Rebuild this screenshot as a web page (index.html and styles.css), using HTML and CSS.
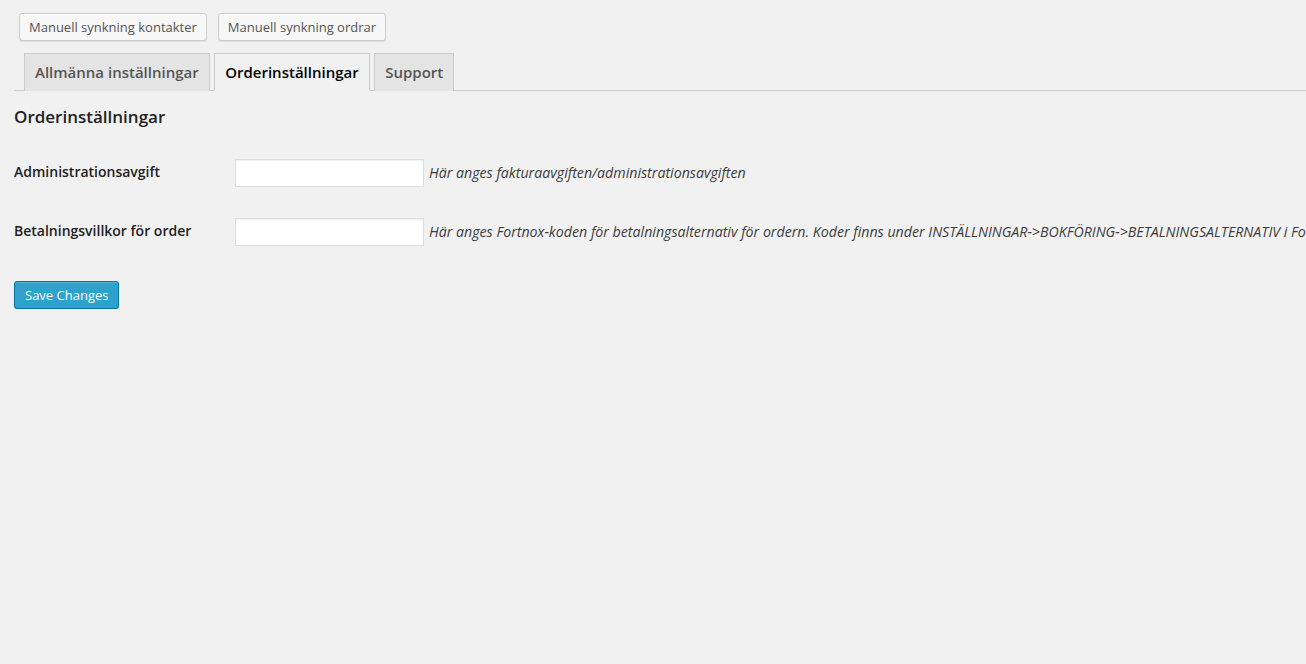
FILE: index.html
```html
<!DOCTYPE html>
<html lang="sv">
<head>
<meta charset="utf-8">
<title>Orderinställningar</title>
<link rel="stylesheet" href="styles.css">
</head>
<body>
<div class="wrap">
  <div class="sync-actions">
    <button class="button" type="button">Manuell synkning kontakter</button>
    <button class="button" type="button">Manuell synkning ordrar</button>
  </div>
  <nav class="nav-tab-wrapper">
    <a class="nav-tab" href="#">Allmänna inställningar</a>
    <a class="nav-tab nav-tab-active" href="#">Orderinställningar</a>
    <a class="nav-tab" href="#">Support</a>
  </nav>
  <form class="settings-form">
    <h3 class="section-title">Orderinställningar</h3>
    <table class="form-table">
      <tbody>
        <tr>
          <th scope="row">Administrationsavgift</th>
          <td><div class="field"><input class="text-input" type="text"><span class="description">Här anges fakturaavgiften/administrationsavgiften</span></div></td>
        </tr>
        <tr>
          <th scope="row">Betalningsvillkor för order</th>
          <td><div class="field"><input class="text-input" type="text"><span class="description">Här anges Fortnox-koden för betalningsalternativ för ordern. Koder finns under INSTÄLLNINGAR-&gt;BOKFÖRING-&gt;BETALNINGSALTERNATIV i Fortnox</span></div></td>
        </tr>
      </tbody>
    </table>
    <p class="submit"><button class="button button-primary" type="submit">Save Changes</button></p>
  </form>
</div>
</body>
</html>
```

FILE: styles.css
```css
html, body {
  margin: 0;
  padding: 0;
  background: #f1f1f1;
  overflow: hidden;
}
body {
  font-family: "Open Sans", "Liberation Sans", sans-serif;
  font-size: 13px;
  color: #444;
  width: 1306px;
  height: 664px;
}
.wrap {
  padding: 13px 0 0 14px;
  overflow: hidden;
}
.sync-actions {
  display: flex;
  gap: 11px;
  margin-left: 5px;
}
.button {
  font-family: inherit;
  font-size: 13px;
  line-height: 26px;
  height: 28px;
  padding: 0 9px 1px;
  color: #555;
  background: #f7f7f7;
  border: 1px solid #ccc;
  border-radius: 3px;
  box-shadow: inset 0 1px 0 #fff, 0 1px 0 rgba(0,0,0,.08);
  cursor: pointer;
  white-space: nowrap;
  box-sizing: border-box;
}
.nav-tab-wrapper {
  display: flex;
  gap: 4.5px;
  margin-top: 12px;
  padding-left: 10px;
  border-bottom: 1px solid #ccc;
}
.nav-tab {
  display: block;
  padding: 6px 10px;
  font-size: 15px;
  line-height: 24px;
  font-weight: 600;
  color: #555;
  background: #e4e4e4;
  border: 1px solid #ccc;
  border-bottom: none;
  text-decoration: none;
  margin-bottom: -1px;
}
.nav-tab-active {
  background: #f1f1f1;
  color: #000;
  border-bottom: 1px solid #f1f1f1;
}
.section-title {
  margin: 15px 0 0;
  font-size: 17px;
  line-height: 22px;
  font-weight: 600;
  color: #222;
}
.form-table {
  border-collapse: collapse;
  table-layout: fixed;
  margin-top: 16px;
  width: 100%;
}
.form-table th {
  width: 200px;
  padding: 19px 10px 22px 0;
  text-align: left;
  vertical-align: top;
  font-size: 14px;
  line-height: 18px;
  font-weight: 600;
  color: #222;
  white-space: nowrap;
}
.form-table td {
  padding: 15px 10px 16px 11px;
  vertical-align: top;
}
.field {
  display: flex;
  align-items: center;
  gap: 5px;
  white-space: nowrap;
}
.text-input {
  flex: none;
  width: 189px;
  height: 28px;
  box-sizing: border-box;
  padding: 3px 5px;
  border: 1px solid #ddd;
  background: #fff;
  box-shadow: inset 0 1px 2px rgba(0,0,0,.07);
  font-family: inherit;
  font-size: 14px;
  margin: 0;
}
.description {
  flex: none;
  font-style: italic;
  font-size: 14.2px;
  line-height: 20px;
  color: #3c3c3c;
}
.submit {
  margin: 0;
  padding: 19px 0 0;
}
.button-primary {
  padding: 0 10px 1px;
  background: #2ea2cc;
  border-color: #0074a2;
  color: #fff;
  box-shadow: inset 0 1px 0 rgba(120,200,230,.5), 0 1px 0 rgba(0,0,0,.15);
}
```
